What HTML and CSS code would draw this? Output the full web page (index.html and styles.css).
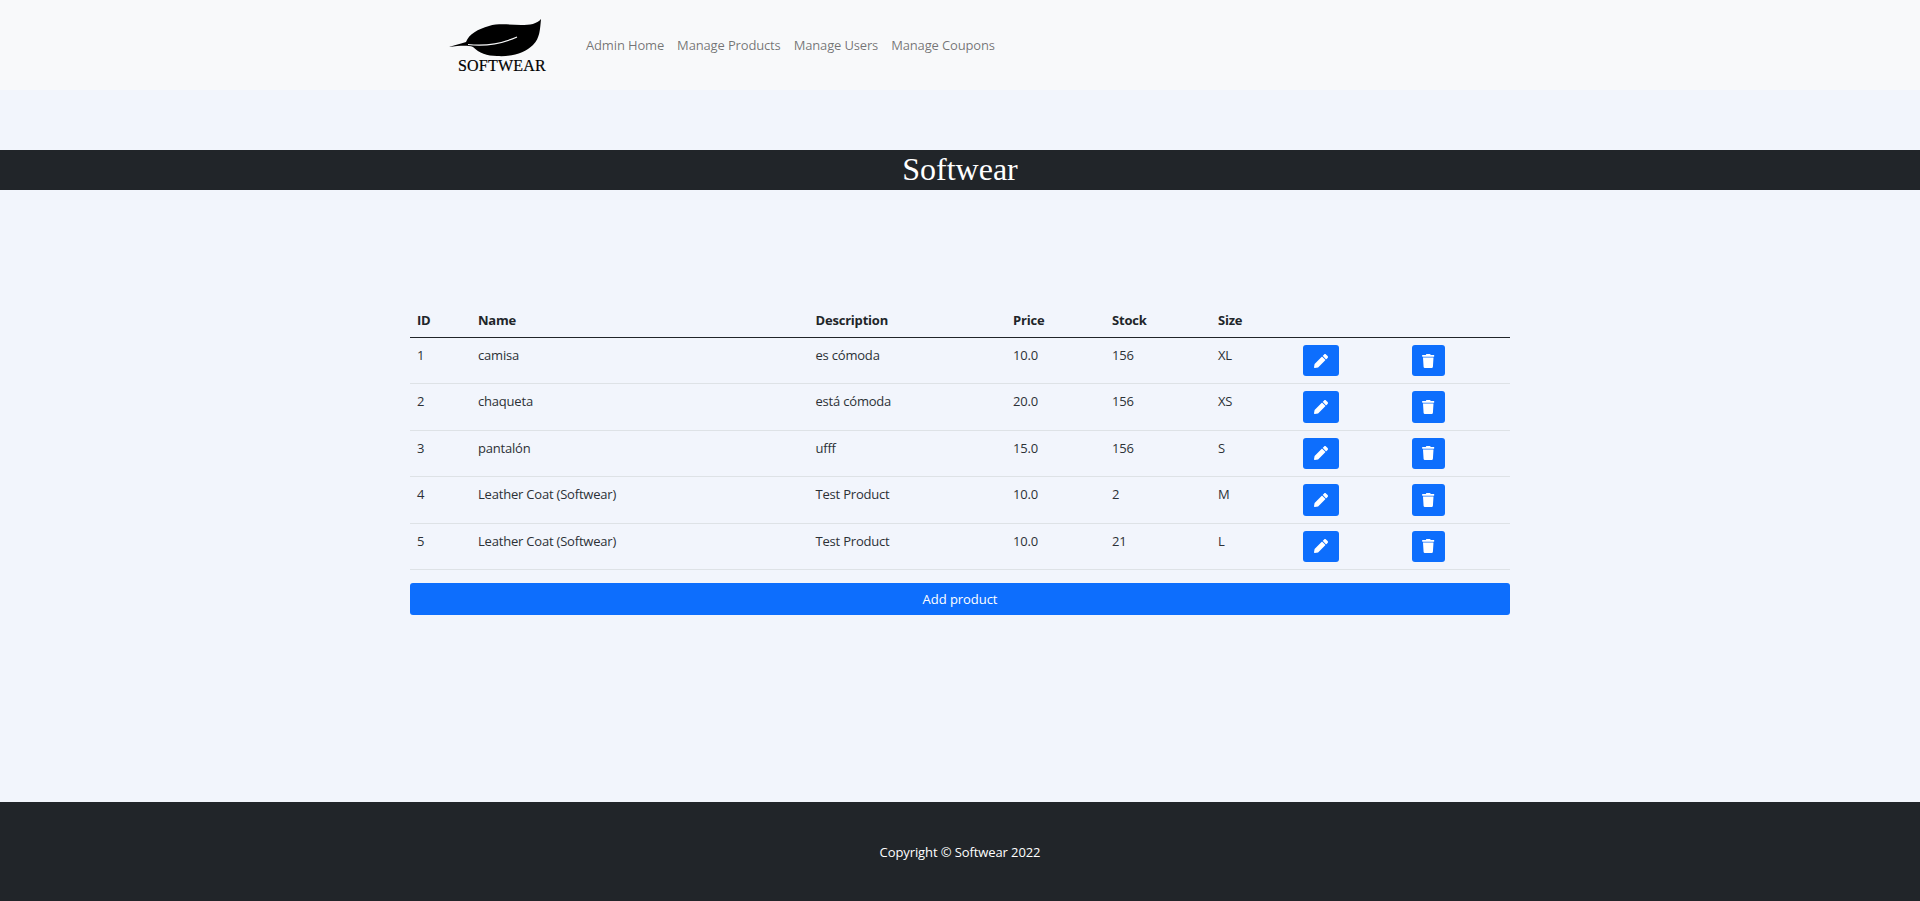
FILE: index.html
```html
<!DOCTYPE html>
<html lang="en">
<head>
<meta charset="utf-8">
<title>Softwear</title>
<link rel="stylesheet" href="styles.css">
</head>
<body>
<svg class="icon-defs" width="0" height="0">
  <symbol id="i-pencil" viewBox="0 0 512 512"><path d="M497.9 142.1l-46.1 46.1c-4.7 4.7-12.3 4.7-17 0l-111-111c-4.7-4.7-4.7-12.3 0-17l46.1-46.1c18.7-18.7 49.1-18.7 67.9 0l60.1 60.1c18.8 18.7 18.8 49.1 0 67.9zM284.2 99.8L21.6 362.4.4 483.9c-2.9 16.4 11.4 30.6 27.8 27.8l121.5-21.3 262.6-262.6c4.7-4.7 4.7-12.3 0-17l-111-111c-4.8-4.7-12.4-4.7-17.1 0z"/></symbol>
  <symbol id="i-trash" viewBox="0 0 448 512"><path d="M432 32H312l-9.4-18.7A24 24 0 0 0 281.1 0H166.8a23.72 23.72 0 0 0-21.4 13.3L136 32H16A16 16 0 0 0 0 48v32a16 16 0 0 0 16 16h416a16 16 0 0 0 16-16V48a16 16 0 0 0-16-16zM53.2 467a48 48 0 0 0 47.9 45h245.8a48 48 0 0 0 47.9-45L416 128H32z"/></symbol>
</svg>

<nav class="navbar">
  <a class="brand" href="#">
    <svg class="brand-leaf" viewBox="0 0 100 40" width="100" height="40">
      <path d="M92 0C88 5 81 6 72 6C62 6 50 4 40 7C29 10 20 15 17 23C12 25 5 26 0 28C10 27 18 26 24 28C30 34 38 37 48 37C62 38 76 34 84 26C91 19 91 10 92 0Z"/>
      <path class="leaf-vein" d="M19 25.500C32 27 50 26 68 18"/>
    </svg>
    <span class="brand-name">SOFTWEAR</span>
  </a>
  <ul class="nav-links">
    <li><a href="#">Admin Home</a></li>
    <li><a href="#">Manage Products</a></li>
    <li><a href="#">Manage Users</a></li>
    <li><a href="#">Manage Coupons</a></li>
  </ul>
</nav>

<main class="content">
  <h1 class="hero">Softwear</h1>
  <section class="products">
    <table class="product-table">
      <colgroup>
        <col class="c-id"><col class="c-name"><col class="c-desc"><col class="c-price">
        <col class="c-stock"><col class="c-size"><col class="c-edit"><col class="c-del">
      </colgroup>
      <thead>
        <tr><th>ID</th><th>Name</th><th>Description</th><th>Price</th><th>Stock</th><th>Size</th><th></th><th></th></tr>
      </thead>
      <tbody>
        <tr>
          <td>1</td><td>camisa</td><td>es cómoda</td><td>10.0</td><td>156</td><td>XL</td>
          <td><a class="btn btn-edit" href="#"><svg class="ic-pencil"><use href="#i-pencil"/></svg></a></td>
          <td><a class="btn btn-del" href="#"><svg class="ic-trash"><use href="#i-trash"/></svg></a></td>
        </tr>
        <tr>
          <td>2</td><td>chaqueta</td><td>está cómoda</td><td>20.0</td><td>156</td><td>XS</td>
          <td><a class="btn btn-edit" href="#"><svg class="ic-pencil"><use href="#i-pencil"/></svg></a></td>
          <td><a class="btn btn-del" href="#"><svg class="ic-trash"><use href="#i-trash"/></svg></a></td>
        </tr>
        <tr>
          <td>3</td><td>pantalón</td><td>ufff</td><td>15.0</td><td>156</td><td>S</td>
          <td><a class="btn btn-edit" href="#"><svg class="ic-pencil"><use href="#i-pencil"/></svg></a></td>
          <td><a class="btn btn-del" href="#"><svg class="ic-trash"><use href="#i-trash"/></svg></a></td>
        </tr>
        <tr>
          <td>4</td><td>Leather Coat (Softwear)</td><td>Test Product</td><td>10.0</td><td>2</td><td>M</td>
          <td><a class="btn btn-edit" href="#"><svg class="ic-pencil"><use href="#i-pencil"/></svg></a></td>
          <td><a class="btn btn-del" href="#"><svg class="ic-trash"><use href="#i-trash"/></svg></a></td>
        </tr>
        <tr>
          <td>5</td><td>Leather Coat (Softwear)</td><td>Test Product</td><td>10.0</td><td>21</td><td>L</td>
          <td><a class="btn btn-edit" href="#"><svg class="ic-pencil"><use href="#i-pencil"/></svg></a></td>
          <td><a class="btn btn-del" href="#"><svg class="ic-trash"><use href="#i-trash"/></svg></a></td>
        </tr>
      </tbody>
    </table>
    <a class="btn btn-add" href="#">Add product</a>
  </section>
</main>

<footer class="footer">
  <p>Copyright © Softwear 2022</p>
</footer>
</body>
</html>
```

FILE: styles.css
```css
* { box-sizing: border-box; }
html, body { margin: 0; height: 100%; }
body {
  display: flex;
  flex-direction: column;
  min-height: 901px;
  background: #f2f5fc;
  color: #212529;
  font: 13px/21px "Open Sans", "Liberation Sans", sans-serif;
}
a { text-decoration: none; }
.icon-defs { position: absolute; }

.navbar {
  display: flex;
  align-items: center;
  height: 90px;
  padding-left: 449px;
  background: #f8f9fa;
}
.brand {
  display: flex;
  flex-direction: column;
  width: 100px;
  margin-right: 37px;
  padding-top: 3px;
  color: #000;
}
.brand-leaf { display: block; fill: #000; }
.leaf-vein { fill: none; stroke: #f8f9fa; stroke-width: 1.2; }
.brand-name {
  margin: -1px 0 0 9px;
  white-space: nowrap;
  font: 16px/16px "Liberation Serif", serif;
  letter-spacing: .2px;
  -webkit-text-stroke: .2px #000;
}
.nav-links {
  display: flex;
  gap: 13px;
  margin: 0;
  padding: 0;
  list-style: none;
  letter-spacing: -.15px;
}
.nav-links a { color: rgba(0, 0, 0, .55); }

.content { flex: 1; padding-top: 60px; }
.hero {
  height: 40px;
  margin: 0;
  background: #212529;
  color: #fff;
  font: 400 32px/38px "Liberation Serif", serif;
  text-align: center;
}
.products { width: 1100px; margin: 112px auto 0 auto; }

.product-table {
  width: 100%;
  table-layout: fixed;
  border-collapse: collapse;
  letter-spacing: -.2px;
}
.c-id { width: 61px; }
.c-name { width: 337.5px; }
.c-desc { width: 197.500px; }
.c-price { width: 99px; }
.c-stock { width: 106px; }
.c-size { width: 85px; }
.c-edit { width: 109px; }
.product-table th {
  padding: 8px 7px 6px 7px;
  text-align: left;
  font-weight: 700;
  border-bottom: 1px solid #212529;
}
.product-table td {
  padding: 7px;
  vertical-align: top;
  color: #2c3136;
  border-bottom: 1px solid #dee2e6;
}

.btn {
  display: flex;
  align-items: center;
  justify-content: center;
  height: 31.400px;
  border-radius: 3px;
  background: #0d6efd;
  color: #fff;
}
.btn-edit { width: 36px; }
.btn-del { width: 33px; }
.btn-add { height: 32px; margin-top: 13.500px; letter-spacing: -.05px; }
.ic-pencil { width: 14px; height: 14px; fill: #fff; }
.ic-trash { width: 12.500px; height: 14px; fill: #fff; }

.footer {
  display: flex;
  align-items: center;
  justify-content: center;
  height: 99px;
  background: #212529;
  color: #fff;
  letter-spacing: -.1px;
}
.footer p { margin: 1px 0 0 0; }
```
